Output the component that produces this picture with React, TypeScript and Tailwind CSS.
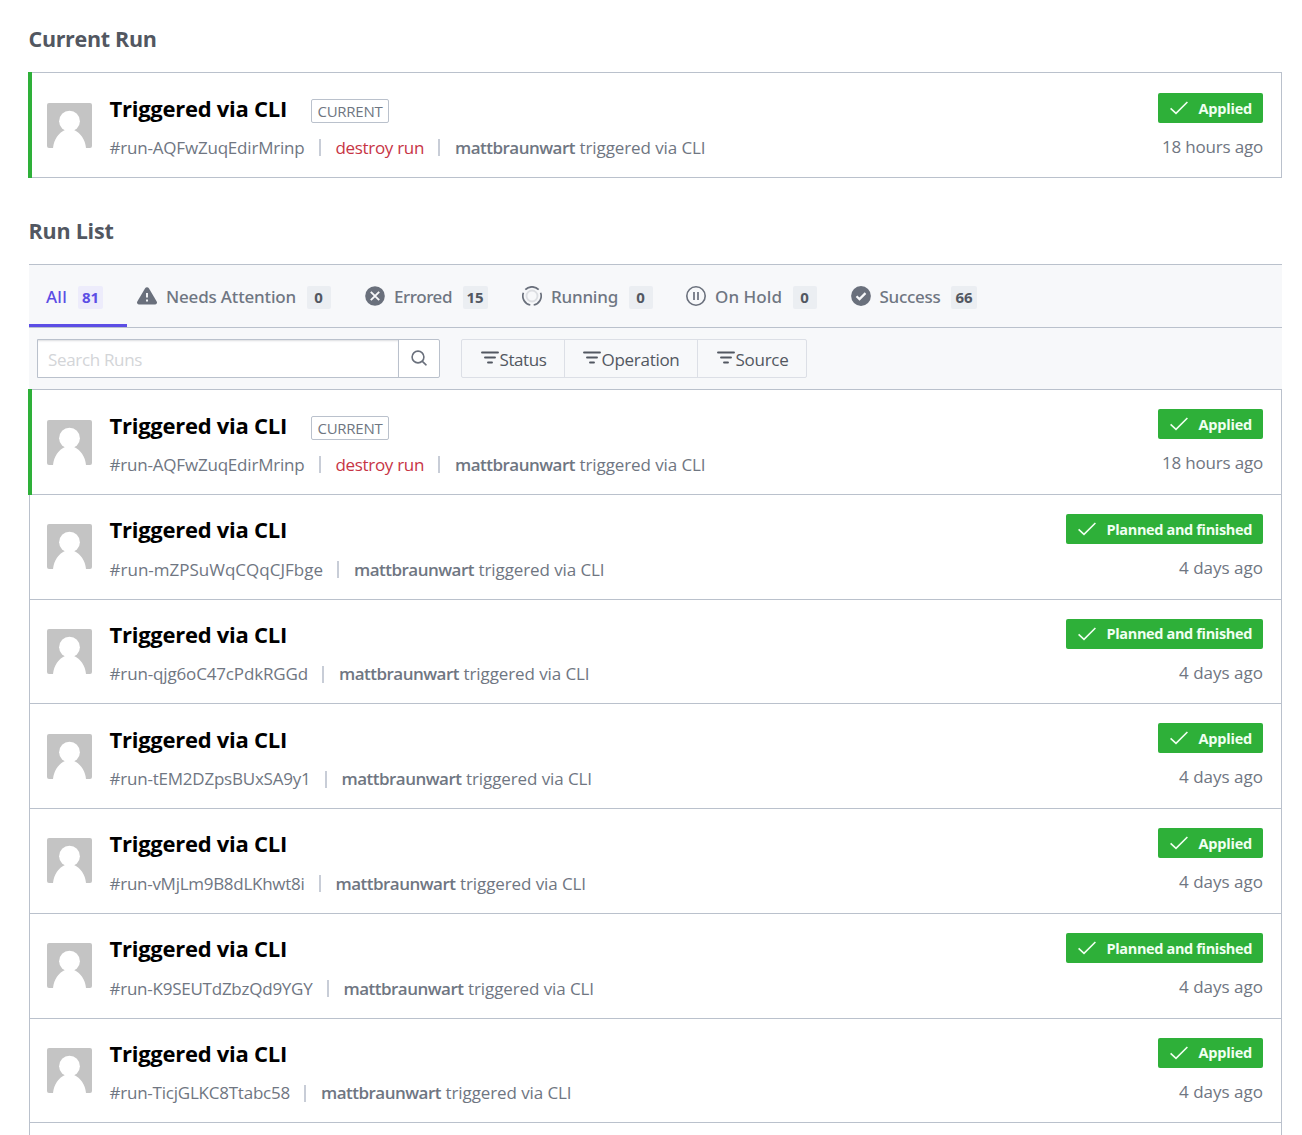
import { useLayoutEffect, useRef, useState, type ReactNode } from "react";

/** Text that spreads its letters evenly over a fixed number of pixels. */
function Fit({ w, className = "", children }: { w: number; className?: string; children: string }) {
  const ref = useRef<HTMLSpanElement>(null);
  const [spacing, setSpacing] = useState(0);
  useLayoutEffect(() => {
    const el = ref.current;
    if (!el) return;
    el.style.letterSpacing = "0px";
    const s = (w - el.getBoundingClientRect().width) / children.length;
    el.style.letterSpacing = `${s}px`;
    setSpacing(s);
  }, [w, children]);
  return (
    <span ref={ref} style={{ letterSpacing: `${spacing}px` }} className={`inline-block shrink-0 whitespace-nowrap ${className}`}>
      {children}
    </span>
  );
}

function Avatar() {
  return (
    <svg width="45" height="45" viewBox="0 0 45 45" className="shrink-0 rounded-[2px]">
      <rect width="45" height="45" fill="#c4c4c4" />
      <circle cx="22.5" cy="18.2" r="10.4" fill="#fff" />
      <path d="M6 45C7 36 11.500 30 18 27h9C33.500 30 38 36 39 45z" fill="#fff" />
    </svg>
  );
}

function Status({ label, w }: { label: string; w: number }) {
  return (
    <div className="flex h-[30px] items-center rounded-[2px] bg-[#2eb039] pl-3 pr-[11px]">
      <svg width="18" height="14" viewBox="0 0 18 14" fill="none" stroke="#f0fff1" strokeWidth="1.6" className="mr-[10.5px]">
        <path d="M.6 7.400 6 12.400 17.400 1" />
      </svg>
      <Fit w={w} className="pt-[1.5px] text-[14.5px] leading-[30px] font-bold text-[#f0fff1]">{label}</Fit>
    </div>
  );
}

function Separator() {
  return <span className="mr-[15px] ml-[14px] h-[17px] w-0.5 shrink-0 bg-[#c8cdd7]" />;
}

type Run = { id: string; w: number; current?: boolean; finished?: boolean };

function RunRow({ run, top }: { run: Run; top: string }) {
  return (
    <div className="flex h-full">
      {run.current && <div className="w-1 shrink-0 bg-[#2eb039]" />}
      <div className={`flex flex-1 items-start border-t border-r border-[#bac1cc] bg-white ${run.current ? "border-b pl-[15px]" : "border-l pl-[17px]"} pr-[18px]`}>
        <div className={`mr-[17.5px] ${run.current ? "pt-[30px]" : "pt-[29.4px]"}`}>
          <Avatar />
        </div>
        <div className={`flex-1 ${run.current ? "pt-[21px]" : "pt-[20.3px]"}`}>
          <div className="flex h-7 items-start">
            <Fit w={177.5} className="text-[22px] leading-7 font-bold text-black">Triggered via CLI</Fit>
            {run.current && (
              <span className="mt-[4.6px] ml-[24px] flex h-[24.5px] w-[78px] items-center justify-center rounded-[2px] border border-[#bac1cc] text-[#6f7682]">
                <Fit w={65} className="text-[15px] leading-5">CURRENT</Fit>
              </span>
            )}
          </div>
          <div className={`flex h-6 items-center text-[17px] leading-6 text-[#6f7682] ${run.current ? "mt-[13.6px]" : "mt-[14.5px]"}`}>
            <Fit w={run.w}>{`#run-${run.id}`}</Fit>
            <Separator />
            {run.current && (
              <>
                <Fit w={88.5} className="text-[#c73445]">destroy run</Fit>
                <Separator />
              </>
            )}
            <Fit w={120} className="font-semibold">mattbraunwart</Fit>
            <Fit w={126} className="ml-[4.5px]">triggered via CLI</Fit>
          </div>
        </div>
        <div className={`flex flex-col items-end ${top}`}>
          <Status label={run.finished ? "Planned and finished" : "Applied"} w={run.finished ? 145.5 : 53.5} />
          <div className="mt-3 text-[17px] leading-6 text-[#6f7682]">
            <Fit w={run.current ? 101 : 84}>{run.current ? "18 hours ago" : "4 days ago"}</Fit>
          </div>
        </div>
      </div>
    </div>
  );
}

const runs: Run[] = [
  { id: "AQFwZuqEdirMrinp", w: 195, current: true },
  { id: "mZPSuWqCQqCJFbge", w: 213.5, finished: true },
  { id: "qjg6oC47cPdkRGGd", w: 198.5, finished: true },
  { id: "tEM2DZpsBUxSA9y1", w: 201 },
  { id: "vMjLm9B8dLKhwt8i", w: 195 },
  { id: "K9SEUTdZbzQd9YGY", w: 203, finished: true },
  { id: "TicjGLKC8Ttabc58", w: 180.5 },
];

function AttentionIcon() {
  return (
    <svg width="20" height="20" viewBox="0 0 20 20">
      <path d="M8.300 2.100a2 2 0 0 1 3.400 0l8 13.400a2 2 0 0 1-1.700 3H2a2 2 0 0 1-1.700-3z" fill="#6a707c" />
      <path d="M10 7v4.500M10 13.600v1.900" stroke="#f7f8fa" strokeWidth="1.900" />
    </svg>
  );
}

function ErroredIcon() {
  return (
    <svg width="20" height="20" viewBox="0 0 20 20">
      <circle cx="10" cy="10" r="9.800" fill="#6a707c" />
      <path d="m5.800 5.800 8.400 8.400m0-8.400-8.400 8.400" stroke="#f7f8fa" strokeWidth="1.900" />
    </svg>
  );
}

function RunningIcon() {
  return (
    <svg width="20" height="20" viewBox="0 0 20 20" fill="none">
      <circle cx="10" cy="10" r="5.500" stroke="#dcdee2" strokeWidth="1.900" />
      <path d="M3.300 3.700A9.200 9.200 0 0 1 16.700 3.700M18.600 6.700A9.200 9.200 0 0 1 11.700 19M1.400 6.700A9.200 9.200 0 0 0 8.300 19" stroke="#6a707c" strokeWidth="1.700" />
    </svg>
  );
}

function HoldIcon() {
  return (
    <svg width="20" height="20" viewBox="0 0 20 20" fill="none" stroke="#6a707c" strokeWidth="1.600">
      <circle cx="10" cy="10" r="9.200" />
      <path d="M8 6v8M12 6v8" strokeWidth="1.700" />
    </svg>
  );
}

function SuccessIcon() {
  return (
    <svg width="20" height="20" viewBox="0 0 20 20">
      <circle cx="10" cy="10" r="9.900" fill="#6a707c" />
      <path d="m5.500 10.200 3 2.900 6-6" stroke="#f7f8fa" strokeWidth="2.200" fill="none" />
    </svg>
  );
}

function FilterIcon() {
  return (
    <svg width="18" height="14" viewBox="0 0 18 14" fill="none" stroke="#525761" strokeWidth="1.900" strokeLinecap="round">
      <path d="M1 1.500h16M4 6.500h10M7 11.500h4" />
    </svg>
  );
}

function Tab({ icon, label, w, count, bw, className }: { icon: ReactNode; label: string; w: number; count: string; bw: string; className: string }) {
  return (
    <div className={`flex h-full items-center pt-0.5 text-[#6f7682] ${className}`}>
      <span className="mr-[9px] mb-0.5">{icon}</span>
      <Fit w={w} className="font-['Noto_Sans','Open_Sans',sans-serif] text-[17px] leading-6 font-medium">{label}</Fit>
      <span className={`ml-[10.5px] flex h-[23px] items-center justify-center rounded-[2px] bg-[#ebeef2] text-[15px] font-bold text-[#525761] ${bw}`}>{count}</span>
    </div>
  );
}

function FilterButton({ label, w, className }: { label: string; w: number; className: string }) {
  return (
    <button className={`flex items-start border-[#dcdfe6] pt-2 text-[#525761] ${className}`}>
      <span className="mt-[3px] mr-[0.5px]"><FilterIcon /></span>
      <Fit w={w} className="text-[17px] leading-6">{label}</Fit>
    </button>
  );
}

export default function App() {
  return (
    <main className="h-[1135px] w-[1302px] overflow-hidden bg-white pt-[25px] pl-[29px] font-['Open_Sans','Noto_Sans',sans-serif]">
      <h2 className="-ml-[0.5px] h-[47px] text-[#525761]">
        <Fit w={128} className="text-[21.5px] leading-7 font-bold">Current Run</Fit>
      </h2>
      <div className="-ml-px h-[106px] w-[1254px]">
        <RunRow run={runs[0]} top="pt-5" />
      </div>
      <h2 className="-ml-[0.5px] mt-[39px] h-[47px] text-[#525761]">
        <Fit w={85} className="text-[21.5px] leading-7 font-bold">Run List</Fit>
      </h2>

      <section className="w-[1253px]">
        <nav className="flex h-16 border-y border-[#bac1cc] bg-[#f7f8fa]">
          <div className="flex w-[98px] items-center border-b-[3px] border-[#5c4ee5] pt-[5px] pl-[17px] text-[#5c4ee5]">
            <Fit w={21} className="font-['Noto_Sans','Open_Sans',sans-serif] text-[17px] leading-6 font-medium">All</Fit>
            <span className="ml-[11px] flex h-[23px] w-[25px] items-center justify-center rounded-[2px] bg-[#edecfb] text-[15px] font-bold">81</span>
          </div>
          <Tab icon={<AttentionIcon />} label="Needs Attention" w={130} count="0" bw="w-6" className="ml-[10px]" />
          <Tab icon={<ErroredIcon />} label="Errored" w={58} count="15" bw="w-[25px]" className="ml-[34.5px]" />
          <Tab icon={<RunningIcon />} label="Running" w={67} count="0" bw="w-6" className="ml-[34.5px]" />
          <Tab icon={<HoldIcon />} label="On Hold" w={67} count="0" bw="w-6" className="ml-[33.5px]" />
          <Tab icon={<SuccessIcon />} label="Success" w={61} count="66" bw="w-[26px]" className="ml-[34px]" />
        </nav>
        <div className="flex h-[61px] bg-[#f7f8fa] pt-[11px] pl-2">
          <div className="flex h-[39px] w-[403px] rounded-r-[2px] border border-[#bac1cc] bg-white">
            <div className="w-[361px] border-r border-[#bac1cc] pt-2 pl-[10px] text-[#d3d5d8] shadow-[inset_0_2px_2px_-1px_rgba(80,85,100,0.2)]">
              <Fit w={94} className="text-[17px] leading-6">Search Runs</Fit>
            </div>
            <svg width="16" height="16" viewBox="0 0 16 16" fill="none" stroke="#6a707c" strokeWidth="1.600" strokeLinecap="round" className="mt-[10px] ml-[12px]">
              <circle cx="7" cy="7" r="5.900" />
              <path d="m11.400 11.400 3.600 3.400" />
            </svg>
          </div>
          <div className="ml-[21px] flex h-[39px] w-[346px] rounded-[2px] border border-[#dcdfe6]">
            <FilterButton label="Status" w={47} className="w-[103px] border-r pl-[19px]" />
            <FilterButton label="Operation" w={78} className="w-[133px] border-r pl-[18px]" />
            <FilterButton label="Source" w={53} className="w-[108px] pl-[19px]" />
          </div>
        </div>
        {runs.map((run) => (
          <div key={run.id} className="h-[104.750px]">
            <div className={run.current ? "relative z-10 -ml-px h-[105.750px] w-[1254px]" : "h-full"}>
              <RunRow run={run} top="pt-[19.2px]" />
            </div>
          </div>
        ))}
        <div className="h-5 border border-b-0 border-[#bac1cc]" />
      </section>
    </main>
  );
}
